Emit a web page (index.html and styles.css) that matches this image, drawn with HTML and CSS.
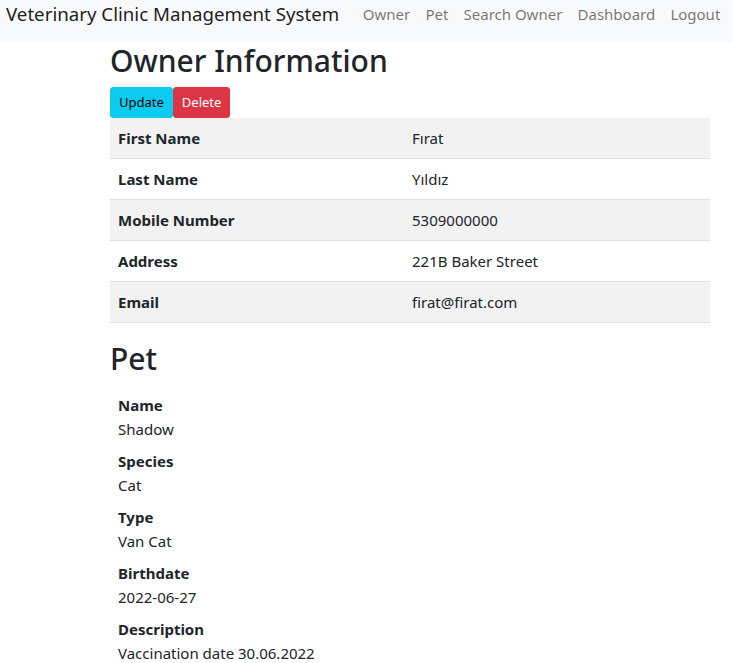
FILE: index.html
```html
<!DOCTYPE html>
<html lang="en">
<head>
<meta charset="utf-8">
<title>Owner Information</title>
<link rel="stylesheet" href="styles.css">
</head>
<body>
<nav class="navbar">
  <a class="brand" href="#">Veterinary Clinic Management System</a>
  <ul class="nav">
    <li><a class="nav-link" href="#">Owner</a></li>
    <li><a class="nav-link" href="#">Pet</a></li>
    <li><a class="nav-link" href="#">Search Owner</a></li>
    <li><a class="nav-link" href="#">Dashboard</a></li>
    <li><a class="nav-link" href="#">Logout</a></li>
  </ul>
</nav>
<main class="container">
  <h1 class="title">Owner Information</h1>
  <div class="actions">
    <button class="btn btn-info">Update</button>
    <button class="btn btn-danger">Delete</button>
  </div>
  <table class="table">
    <tbody>
      <tr><th>First Name</th><td>Fırat</td></tr>
      <tr><th>Last Name</th><td>Yıldız</td></tr>
      <tr><th>Mobile Number</th><td>5309000000</td></tr>
      <tr><th>Address</th><td>221B Baker Street</td></tr>
      <tr><th>Email</th><td>firat@firat.com</td></tr>
    </tbody>
  </table>
  <h1 class="title">Pet</h1>
  <dl class="pet">
    <dt>Name</dt><dd>Shadow</dd>
    <dt>Species</dt><dd>Cat</dd>
    <dt>Type</dt><dd>Van Cat</dd>
    <dt>Birthdate</dt><dd>2022-06-27</dd>
    <dt>Description</dt><dd>Vaccination date 30.06.2022</dd>
  </dl>
</main>
</body>
</html>
```
FILE: styles.css
```css
* { box-sizing: border-box; }
body {
  margin: 0;
  font-family: "Noto Sans", "Open Sans", sans-serif;
  font-size: 15px;
  line-height: 24px;
  color: #212529;
  background: #fff;
}
.navbar {
  display: flex;
  align-items: flex-start;
  height: 41px;
  padding: 0 6px;
  background: #f8f9fa;
  white-space: nowrap;
}
.brand {
  font-size: 18.7px;
  line-height: 28px;
  color: rgba(0,0,0,.9);
  text-decoration: none;
  margin-right: 16px;
}
.nav {
  display: flex;
  list-style: none;
  margin: 0;
  padding: 0;
}
.nav-link {
  display: block;
  padding: 0 7.6px;
  line-height: 28px;
  color: rgba(0,0,0,.55);
  text-decoration: none;
}
.container {
  width: 600px;
  margin-left: 110px;
}
.title {
  font-size: 30px;
  font-weight: 500;
  line-height: 40px;
  margin: 0 0 6px;
}
.actions {
  display: flex;
}
.btn {
  font-family: inherit;
  font-size: 13px;
  line-height: 21px;
  padding: 4px 8px;
  border: 1px solid transparent;
  border-radius: 3px;
  cursor: pointer;
}
.btn-info { background: #0dcaf0; border-color: #0dcaf0; color: #000; }
.btn-danger { background: #dc3545; border-color: #dc3545; color: #fff; }
.table {
  width: 100%;
  table-layout: fixed;
  border-collapse: collapse;
  margin-bottom: 16px;
}
.table th, .table td {
  padding: 8px;
  text-align: left;
  border-bottom: 1px solid #dee2e6;
  vertical-align: top;
}
.table th { width: 294px; font-weight: 700; }
.table tr:nth-child(odd) { background: #f2f2f2; }
.pet {
  margin: 14px 0 0 8px;
}
.pet dt { font-weight: 700; }
.pet dd { margin: 0 0 8px; }
```
